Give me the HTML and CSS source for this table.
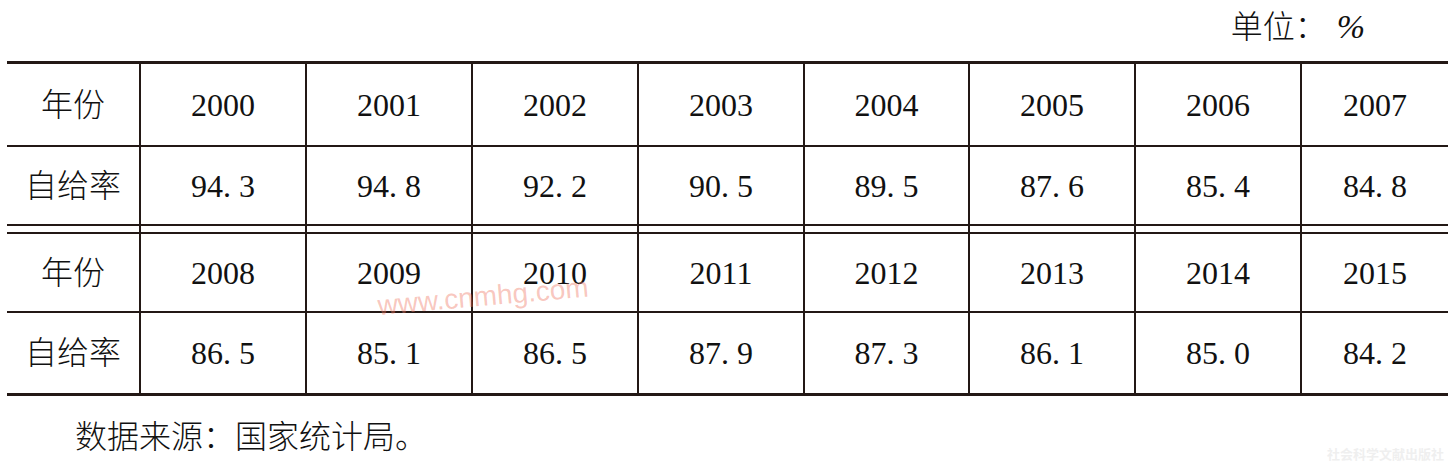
FILE: index.html
```html
<!DOCTYPE html>
<html lang="zh">
<head>
<meta charset="utf-8">
<link rel="stylesheet" href="styles.css">
</head>
<body>
<div class="page">
  <div class="unit">单位：<span class="pct">%</span></div>
  <table class="data">
    <colgroup>
      <col class="c-head"><col class="c"><col class="c"><col class="c"><col class="c"><col class="c5"><col class="c"><col class="c"><col class="c-last">
    </colgroup>
    <tbody>
      <tr class="r1">
        <td class="lab">年份</td><td>2000</td><td>2001</td><td>2002</td><td>2003</td><td>2004</td><td>2005</td><td>2006</td><td>2007</td>
      </tr>
      <tr class="r2">
        <td class="lab">自给率</td><td>94. 3</td><td>94. 8</td><td>92. 2</td><td>90. 5</td><td>89. 5</td><td>87. 6</td><td>85. 4</td><td>84. 8</td>
      </tr>
      <tr class="gap">
        <td></td><td></td><td></td><td></td><td></td><td></td><td></td><td></td><td></td>
      </tr>
      <tr class="r3">
        <td class="lab">年份</td><td>2008</td><td>2009</td><td>2010</td><td>2011</td><td>2012</td><td>2013</td><td>2014</td><td>2015</td>
      </tr>
      <tr class="r4">
        <td class="lab">自给率</td><td>86. 5</td><td>85. 1</td><td>86. 5</td><td>87. 9</td><td>87. 3</td><td>86. 1</td><td>85. 0</td><td>84. 2</td>
      </tr>
    </tbody>
  </table>
  <p class="source">数据来源：国家统计局。</p>
  <div class="watermark">www.cnmhg.com</div>
  <div class="publisher">社会科学文献出版社</div>
</div>
</body>
</html>
```
FILE: styles.css
```css
html, body {
  margin: 0;
  padding: 0;
  background: #ffffff;
}

body {
  font-family: "Liberation Serif", "Noto Sans CJK SC", serif;
  font-weight: 300;
  color: #111;
  width: 1454px;
  height: 463px;
  overflow: hidden;
}

.page {
  position: relative;
  padding-left: 7px;
  width: 1441px;
  height: 463px;
}

.unit {
  height: 61px;
  box-sizing: border-box;
  padding-right: 83px;
  padding-top: 7px;
  text-align: right;
  font-size: 32px;
  line-height: 40px;
}

.pct {
  font-style: italic;
  font-size: 34px;
  margin-left: 10px;
}

.data {
  border-collapse: separate;
  border-spacing: 0;
  width: 1441px;
  table-layout: fixed;
  font-size: 32px;
}

.c-head { width: 132px; }
.c { width: 166px; }
.c5 { width: 165px; }
.c-last { width: 148px; }

.data td {
  padding: 0;
  text-align: center;
  vertical-align: middle;
  border-left: 2px solid #231815;
  line-height: 40px;
}

.data td:first-child {
  border-left: none;
}

.data .lab {
  text-align: center;
}

.r1 td {
  border-top: 3px solid #231815;
  border-bottom: 2px solid #231815;
  height: 81px;
}

.r2 td {
  border-bottom: 2px solid #231815;
  height: 77px;
}

.gap td {
  height: 6px;
  line-height: 0;
  font-size: 0;
}

.r3 td {
  border-top: 2px solid #231815;
  border-bottom: 2px solid #231815;
  height: 77px;
}

.r4 td {
  border-bottom: 3px solid #231815;
  height: 80px;
}

.source {
  margin: 21px 0 0 68px;
  font-size: 32px;
  line-height: 40px;
}

.watermark {
  position: absolute;
  left: 379px;
  top: 290px;
  font-family: "Liberation Sans", sans-serif;
  font-weight: 400;
  font-size: 28px;
  line-height: 32px;
  color: rgba(240, 120, 100, 0.42);
  transform: rotate(-5deg);
  transform-origin: left bottom;
}

.publisher {
  position: absolute;
  right: 4px;
  top: 446px;
  font-family: "Noto Sans CJK SC", sans-serif;
  font-weight: 700;
  font-size: 13px;
  line-height: 16px;
  color: #efefef;
}
```
